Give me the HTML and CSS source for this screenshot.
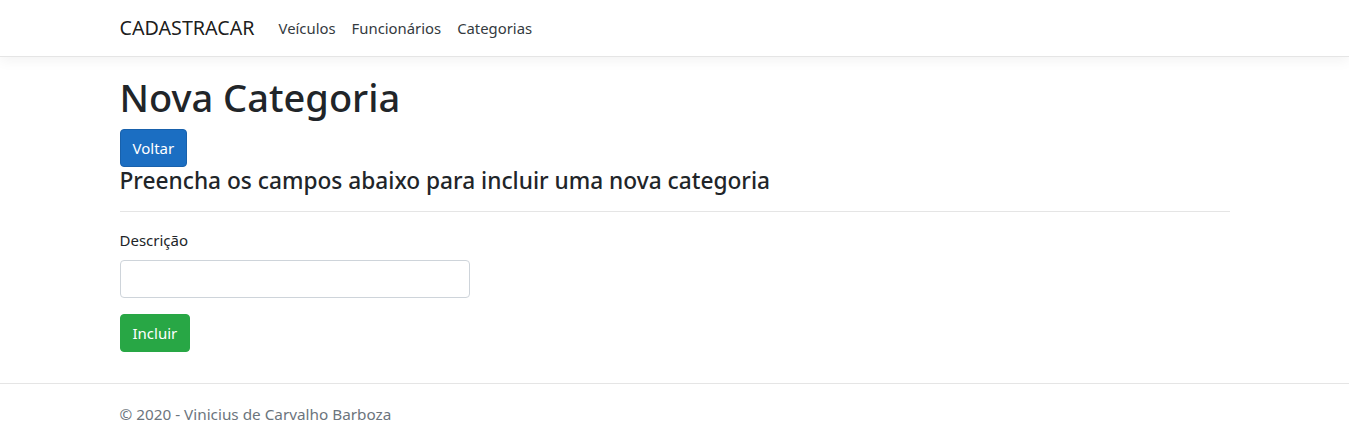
FILE: index.html
```html
<!DOCTYPE html>
<html lang="pt-br">
<head>
<meta charset="utf-8">
<title>Nova Categoria - CADASTRACAR</title>
<link rel="stylesheet" href="styles.css">
</head>
<body>
<header>
  <nav class="navbar">
    <div class="container nav-inner">
      <a class="brand" href="#">CADASTRACAR</a>
      <ul class="nav-list">
        <li><a class="nav-link" href="#">Veículos</a></li>
        <li><a class="nav-link" href="#">Funcionários</a></li>
        <li><a class="nav-link" href="#">Categorias</a></li>
      </ul>
    </div>
  </nav>
</header>
<div class="container main">
  <h1 class="title">Nova Categoria</h1>
  <a class="btn btn-primary" href="#">Voltar</a>
  <h4 class="subtitle">Preencha os campos abaixo para incluir uma nova categoria</h4>
  <hr class="divider">
  <div class="row">
    <div class="col-4">
      <form>
        <div class="form-group">
          <label class="label" for="descricao">Descrição</label>
          <input class="form-control" id="descricao" type="text">
        </div>
        <div class="form-group">
          <input class="btn btn-success" type="submit" value="Incluir">
        </div>
      </form>
    </div>
  </div>
</div>
<footer class="footer">
  <div class="container footer-text">© 2020 - Vinicius de Carvalho Barboza</div>
</footer>
</body>
</html>
```

FILE: styles.css
```css
* { box-sizing: border-box; }
html { font-size: 16px; }
body {
  margin: 0;
  min-height: 100vh;
  display: flex;
  flex-direction: column;
  font-family: "Segoe UI", "Noto Sans", "Open Sans", sans-serif;
  font-size: 15px;
  line-height: 24px;
  color: #212529;
  background: #fff;
}
a { text-decoration: none; }
.container {
  width: 1140px;
  margin: 0 auto;
  padding: 0 15px;
}
.navbar {
  background: #fff;
  border-bottom: 1px solid #e5e5e5;
  box-shadow: 0 .25rem .75rem rgba(0,0,0,.05);
  padding: 8px 0;
  margin-bottom: 16px;
}
.nav-inner {
  display: flex;
  align-items: center;
}
.brand {
  font-size: 19.7px;
  line-height: 30px;
  padding: 5px 0;
  margin-right: 16px;
  color: rgba(0,0,0,.9);
  white-space: nowrap;
}
.nav-list {
  display: flex;
  list-style: none;
  margin: 0;
  padding: 0;
}
.nav-link {
  display: block;
  padding: 8px 8px;
  font-size: 14.85px;
  color: #343a40;
}
.title {
  font-size: 38px;
  font-weight: 500;
  line-height: 48px;
  margin: 0 0 8px;
}
.btn {
  display: inline-block;
  font-family: inherit;
  font-size: 15px;
  line-height: 24px;
  padding: 6px 12px;
  border: 1px solid transparent;
  border-radius: 4px;
  color: #fff;
  cursor: pointer;
}
.btn-primary { background: #1b6ec2; border-color: #1861ac; }
.btn-success { background: #28a745; border-color: #28a745; }
.subtitle {
  font-size: 22.7px;
  font-weight: 500;
  line-height: 28px;
  margin: 0 0 8px;
}
.divider {
  border: 0;
  border-top: 1px solid rgba(0,0,0,.1);
  margin: 16px 0;
}
.row { display: flex; margin: 0 -15px; }
.col-4 { width: calc(100% / 3); padding: 0 15px; }
.form-group { margin-bottom: 16px; }
.label { display: inline-block; margin-bottom: 8px; }
.form-control {
  display: block;
  width: 100%;
  height: 38px;
  padding: 6px 12px;
  font-family: inherit;
  font-size: 15px;
  line-height: 24px;
  color: #495057;
  background: #fff;
  border: 1px solid #ced4da;
  border-radius: 4px;
}
.footer {
  margin-top: auto;
  border-top: 1px solid #e5e5e5;
  line-height: 60px;
  white-space: nowrap;
}
.footer-text { color: #6c757d; font-size: 15.3px; }
```
